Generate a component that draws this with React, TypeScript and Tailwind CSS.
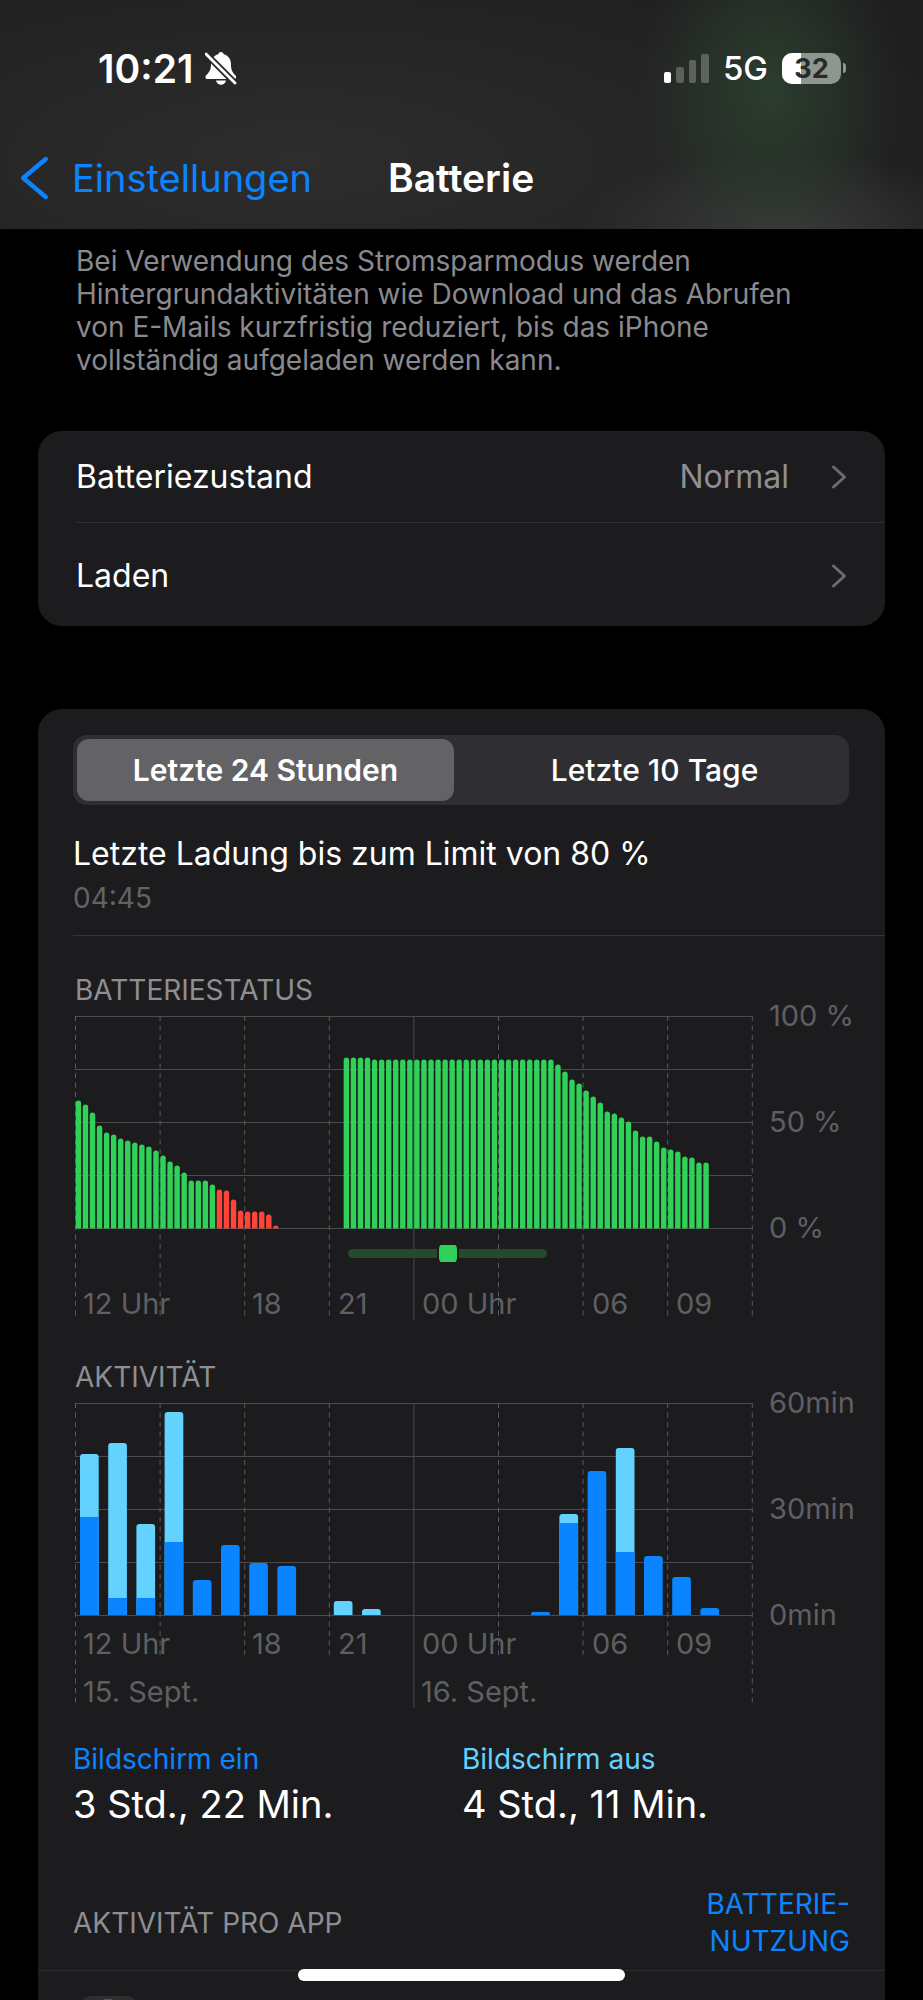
const PITCH = 677 / 96;

// height of each battery bar, read off the chart (px above baseline)
const leftBars = [
  128, 124, 116, 103, 96, 94, 90, 88, 86, 84, 82, 78, 73, 67, 63, 56, 48, 48, 48, 44, 39, 38, 29, 18, 17, 17, 17, 14, 3,
];
const rightBars = [
  171, 171, 171, 171, 169, 169, 169, 169, 169, 169, 169, 169, 169, 169, 169, 169, 169, 169, 169, 169, 169, 169, 169,
  169, 169, 169, 169, 169, 169, 169, 164, 157, 149, 145, 138, 132, 126, 117, 115, 111, 107, 98, 92, 92, 87, 81, 79, 77,
  72, 71, 66, 66,
];

const activity: [number, number, number][] = [
  [0, 161, 98],
  [1, 172, 17],
  [2, 91, 17],
  [3, 203, 73],
  [4, 35, 35],
  [5, 70, 70],
  [6, 52, 52],
  [7, 49, 49],
  [9, 14, 0],
  [10, 6, 0],
  [16, 3, 3],
  [17, 101, 92],
  [18, 144, 144],
  [19, 167, 63],
  [20, 59, 59],
  [21, 38, 38],
  [22, 7, 7],
];

function ChartGrid({ shortTo, longTo }: { shortTo: number; longTo: number }) {
  const xs = [0, 1, 2, 3, 4, 5, 6, 7, 8];
  return (
    <>
      {[0, 53, 106, 159, 212].map((y) => (
        <line key={y} x1="0" x2="677" y1={y + 0.5} y2={y + 0.5} stroke="#4b4b4d" strokeWidth="1.2" />
      ))}
      {xs.map((i) => {
        const x = i * 84.6 + 0.5;
        if (i === 4) return <line key={i} x1={x} x2={x} y1="0" y2={longTo + 4} stroke="#4b4b4d" strokeWidth="1" />;
        return (
          <line
            key={i}
            x1={x}
            x2={x}
            y1="0"
            y2={i === 0 || i === 8 ? longTo : shortTo}
            stroke="#5a5a5c"
            strokeWidth="1"
            strokeDasharray="5 4.5"
          />
        );
      })}
    </>
  );
}

function BatteryChart() {
  return (
    <svg width="678" height="304" className="absolute left-0 top-0">
      <ChartGrid shortTo={304} longTo={304} />
      {leftBars.map((h, i) => (
        <path
          key={i}
          d={`M${i * PITCH + 0.7} 212.5v${-(h - 2.7)}a2.7 2.7 0 0 1 5.4 0v${h - 2.7}z`}
          fill={i >= 20 ? "#ff453a" : "#30d158"}
        />
      ))}
      {rightBars.map((h, i) => (
        <path
          key={i}
          d={`M${(i + 38) * PITCH + 0.7} 212.5v${-(h - 2.7)}a2.7 2.7 0 0 1 5.4 0v${h - 2.7}z`}
          fill="#30d158"
        />
      ))}
    </svg>
  );
}

function ActivityChart() {
  return (
    <svg width="678" height="306" className="absolute left-0 top-0">
      <ChartGrid shortTo={253} longTo={301} />
      {activity.map(([i, total, dark]) => {
        const x = 5 + i * 28.2;
        const r = Math.min(3, total / 2);
        const d = `M${x} 212v${-(total - r)}q0 ${-r} ${r} ${-r}h${18.7 - 2 * r}q${r} 0 ${r} ${r}v${total - r}z`;
        return (
          <g key={i}>
            <path d={d} fill={dark === total ? "#0a84ff" : "#64d2ff"} />
            {dark > 0 && dark < total && <rect x={x} y={212 - dark} width="18.7" height={dark} fill="#0a84ff" />}
          </g>
        );
      })}
    </svg>
  );
}

function XLabels() {
  return (
    <div className="relative z-10 grid grid-cols-[169px_86px_84px_170px_84px_85px] pl-2 text-[29px] leading-[32px] text-[#5f5f63]">
      <span>12 Uhr</span>
      <span>18</span>
      <span>21</span>
      <span>00 Uhr</span>
      <span>06</span>
      <span>09</span>
    </div>
  );
}

function YLabels({ labels }: { labels: string[] }) {
  return (
    <div className="absolute left-[694px] top-[-19px] flex h-[250px] flex-col justify-between text-[29px] leading-[38px] whitespace-nowrap text-[#5f5f63]">
      {labels.map((l) => (
        <span key={l}>{l}</span>
      ))}
    </div>
  );
}

function BellSlash() {
  return (
    <svg width="32" height="33" viewBox="0 0 32 33" className="ml-[12px]">
      <path
        d="M16 0c1.5 0 2.5 1 2.7 2.3C23.5 3.5 26 7.5 26 12.5c0 5 1 7.5 4.5 11 1.2 1.2.5 3.5-1.5 3.5H2.5c-2 0-2.7-2.3-1.5-3.5C4.5 20 6 17.5 6 12.5 6 7.5 8.5 3.5 13.3 2.3 13.5 1 14.5 0 16 0z"
        fill="#fff"
      />
      <path d="M11 28.5h10c-.5 2.5-2.5 4.3-5 4.3s-4.500-1.800-5-4.300z" fill="#fff" />
      <path d="M-1 0 31 32" stroke="#2a2a2a" strokeWidth="6.5" />
      <path d="M1 2 30 31" stroke="#fff" strokeWidth="2.8" strokeLinecap="round" />
    </svg>
  );
}

function Chevron() {
  return (
    <svg width="16" height="24" viewBox="0 0 16 24" fill="none">
      <path d="M2.5 2 13.5 12 2.5 22" stroke="#6c6c70" strokeWidth="3" strokeLinecap="round" strokeLinejoin="round" />
    </svg>
  );
}

export default function App() {
  return (
    <div className="relative h-[2000px] w-[923px] overflow-hidden bg-black font-['Inter',sans-serif] text-white">
      <header className="h-[229px] bg-[radial-gradient(ellipse_130px_180px_at_770px_90px,#2b3d2e_0%,transparent_100%),radial-gradient(ellipse_200px_80px_at_780px_229px,#3a3a3a_0%,transparent_100%),radial-gradient(ellipse_680px_230px_at_300px_160px,#2d2d2d_0%,#1f1f1f_100%)]">
        <div className="flex h-[136px] items-center pl-[98px] pr-[77px]">
          <span className="text-[39px] font-semibold leading-none">10:21</span>
          <BellSlash />
          <div className="ml-auto flex items-center">
            <div className="flex h-[29px] items-end gap-[5px]">
              <i className="block h-[11px] w-[7.5px] rounded-[2px] bg-white" />
              <i className="block h-[16px] w-[7.5px] rounded-[2px] bg-white/25" />
              <i className="block h-[23px] w-[7.5px] rounded-[2px] bg-white/25" />
              <i className="block h-[29px] w-[7.5px] rounded-[2px] bg-white/25" />
            </div>
            <span className="ml-[14px] text-[33px] font-medium leading-none">5G</span>
            <div className="relative ml-[14px] flex h-[31px] w-[59px] items-center justify-center overflow-hidden rounded-[10px] bg-[#8f9690]">
              <i className="absolute bottom-0 left-0 top-0 block w-[19px] bg-white" />
              <span className="relative text-[27px] font-bold leading-none text-[#262b27]">32</span>
            </div>
            <i className="ml-[2px] block h-[10px] w-[3px] rounded-r-full bg-[#8f9690]" />
          </div>
        </div>
        <nav className="flex items-center pt-[17px]">
          <svg width="30" height="46" viewBox="0 0 30 46" fill="none" className="ml-[19px]">
            <path
              d="M26.8 4 4.2 23 26.8 42"
              stroke="#0a84ff"
              strokeWidth="4.4"
              strokeLinecap="round"
              strokeLinejoin="round"
            />
          </svg>
          <span className="ml-[23px] text-[38px] leading-[50px] text-[#0a84ff]">Einstellungen</span>
          <span className="ml-[76px] text-[39px] font-semibold leading-[50px]">Batterie</span>
        </nav>
      </header>

      <p className="pl-[76px] pt-[16px] text-[28px] leading-[33px] text-[#8a8a8e]">
        Bei Verwendung des Stromsparmodus werden
        <br />
        Hintergrundaktivitäten wie Download und das Abrufen
        <br />
        von E-Mails kurzfristig reduziert, bis das iPhone
        <br />
        vollständig aufgeladen werden kann.
      </p>

      <section className="mx-[38px] mt-[54px] h-[195px] rounded-[24px] bg-[#1c1c1e] pl-[38px] text-[32px]">
        <div className="flex h-[92px] items-center border-b border-[#2f2f31] pr-[38px]">
          <span>Batteriezustand</span>
          <span className="ml-auto text-[#8e8e93]">Normal</span>
          <span className="ml-[42px]">
            <Chevron />
          </span>
        </div>
        <div className="flex h-[103px] items-center pr-[38px] pt-[3px]">
          <span>Laden</span>
          <span className="ml-auto">
            <Chevron />
          </span>
        </div>
      </section>

      <section className="mx-[38px] mt-[83px] h-[1400px] rounded-[24px] bg-[#1c1c1e] pt-[26px]">
        <div className="ml-[35px] flex h-[70px] w-[776px] items-center rounded-[14px] bg-[#2f2f33] p-[4px] text-[30px]">
          <div className="flex h-[62px] w-[377px] items-center justify-center rounded-[12px] bg-[#636366] font-semibold">
            Letzte 24 Stunden
          </div>
          <div className="flex-1 pl-[10px] text-center font-medium">Letzte 10 Tage</div>
        </div>

        <div className="ml-[35px] border-b border-[#363638] pb-[18px] pt-[28px]">
          <div className="text-[32px] leading-[42px]">Letzte Ladung bis zum Limit von 80 %</div>
          <div className="pt-[4px] text-[28px] leading-[38px] text-[#636366]">04:45</div>
        </div>

        <div className="pl-[37px] pt-[36px]">
          <h3 className="text-[28px] font-normal leading-[36px] text-[#8e8e93]">BATTERIESTATUS</h3>
          <div className="relative mt-[8px] h-[304px] w-[678px]">
            <BatteryChart />
            <YLabels labels={["100 %", "50 %", "0 %"]} />
            <div className="absolute left-[273px] top-[233px] h-[9px] w-[199px] rounded-full bg-[#24492d]" />
            <div className="absolute left-[362px] top-[229px] h-[17px] w-[22px] rounded-[4px] border-x-2 border-[#1c1c1e] bg-[#30d158] bg-clip-padding" />
            <div className="pt-[272px]">
              <XLabels />
            </div>
          </div>
        </div>

        <div className="pl-[37px] pt-[39px]">
          <h3 className="text-[28px] font-normal leading-[36px] text-[#8e8e93]">AKTIVITÄT</h3>
          <div className="relative mt-[8px] h-[306px] w-[678px]">
            <ActivityChart />
            <YLabels labels={["60min", "30min", "0min"]} />
            <div className="pt-[225px]">
              <XLabels />
              <div className="grid grid-cols-[338px_1fr] pl-2 pt-[16px] text-[29px] leading-[32px] text-[#5f5f63]">
                <span>15. Sept.</span>
                <span>16. Sept.</span>
              </div>
            </div>
          </div>
        </div>

        <div className="grid grid-cols-[389px_1fr] pl-[35px] pt-[32px]">
          <div>
            <div className="text-[28px] leading-[36px] text-[#0a84ff]">Bildschirm ein</div>
            <div className="pt-[5px] text-[38px] leading-[44px]">3 Std., 22 Min.</div>
          </div>
          <div>
            <div className="text-[28px] leading-[36px] text-[#64d2ff]">Bildschirm aus</div>
            <div className="pt-[5px] text-[38px] leading-[44px]">4 Std., 11 Min.</div>
          </div>
        </div>

        <div className="flex h-[145px] items-center justify-between border-b border-[#2c2c2e] pl-[35px] pr-[35px] pt-[50px] text-[28px] leading-[37px]">
          <span className="text-[#8e8e93]">AKTIVITÄT PRO APP</span>
          <span className="text-right text-[#0a84ff]">
            BATTERIE-
            <br />
            NUTZUNG
          </span>
        </div>
        <div className="ml-[40px] mt-[25px] h-[62px] w-[62px] overflow-hidden rounded-[14px] bg-[#2e2e30]">
          <div className="ml-[24px] mt-[3px] h-[8px] w-[12px] rounded-full bg-[#2f6f66]" />
        </div>
      </section>

      <div className="absolute left-[298px] top-[1969px] h-[12px] w-[327px] rounded-full bg-white" />
    </div>
  );
}
